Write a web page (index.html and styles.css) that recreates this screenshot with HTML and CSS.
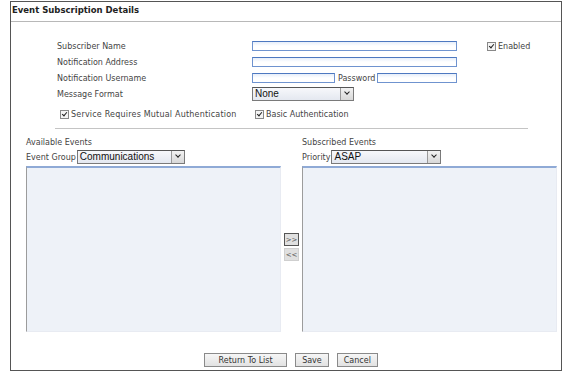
FILE: index.html
```html
<!DOCTYPE html>
<html lang="en">
<head>
    <meta charset="UTF-8">
    <title>Event Subscription Details</title>
    <link rel="stylesheet" href="styles.css">
</head>
<body>

    <div class="panel">
        <div class="panel-title">Event Subscription Details</div>

        <div class="form">
            <div class="row">
                <label class="label">Subscriber Name</label>
                <input type="text" class="text-input wide">
                <span class="check-wrap enabled"><span class="check"></span>Enabled</span>
            </div>
            <div class="row">
                <label class="label">Notification Address</label>
                <input type="text" class="text-input wide">
            </div>
            <div class="row">
                <label class="label">Notification Username</label>
                <div class="pair">
                    <input type="text" class="text-input short">
                    <span class="inline-label">Password</span>
                    <input type="text" class="text-input fill">
                </div>
            </div>
            <div class="row">
                <label class="label">Message Format</label>
                <div class="fake-select format">
                    <span class="sel-text">None</span>
                    <span class="sel-arrow"></span>
                </div>
            </div>
            <div class="row checks">
                <span class="check-wrap mutual"><span class="check"></span>Service Requires Mutual Authentication</span>
                <span class="check-wrap"><span class="check"></span>Basic Authentication</span>
            </div>
        </div>

        <hr class="divider">

        <div class="lists">
            <div class="list-col">
                <div class="list-title">Available Events</div>
                <div class="list-filter">
                    <span>Event Group</span>
                    <div class="fake-select group">
                        <span class="sel-text">Communications</span>
                        <span class="sel-arrow"></span>
                    </div>
                </div>
                <div class="listbox"></div>
            </div>

            <div class="move-btns">
                <button class="move-btn active">&gt;&gt;</button>
                <button class="move-btn">&lt;&lt;</button>
            </div>

            <div class="list-col">
                <div class="list-title">Subscribed Events</div>
                <div class="list-filter">
                    <span>Priority</span>
                    <div class="fake-select priority">
                        <span class="sel-text">ASAP</span>
                        <span class="sel-arrow"></span>
                    </div>
                </div>
                <div class="listbox"></div>
            </div>
        </div>

        <div class="actions">
            <button class="btn return">Return To List</button>
            <button class="btn">Save</button>
            <button class="btn">Cancel</button>
        </div>
    </div>

</body>
</html>
```

FILE: styles.css
```css
body {
    margin: 0;
    padding: 0;
    background: white;
    font-family: "DejaVu Sans", Verdana, sans-serif;
    font-size: 8px;
    color: #333;
}

.panel {
    margin: 1px 0 0 10px;
    width: 552px;
    height: 370px;
    box-sizing: border-box;
    border: 1px solid #555;
    display: flex;
    flex-direction: column;
}

.panel-title {
    height: 19px;
    line-height: 17px;
    padding-left: 1px;
    font-weight: bold;
    font-size: 8.5px;
    color: #222;
    border-bottom: 1px solid #b8b8b8;
}

.form {
    margin-top: 16px;
    padding-left: 46px;
}

.row {
    display: flex;
    align-items: center;
    height: 16px;
}

.label {
    width: 195px;
    color: #444;
}

.text-input {
    height: 10px;
    box-sizing: border-box;
    border: 1px solid #6f93cf;
    border-top-color: #4d78c0;
    background: linear-gradient(#e6eefa, #ffffff 50%);
    padding: 0;
    margin: 0;
    outline: none;
}

.wide {
    width: 205px;
}

.pair {
    width: 205px;
    display: flex;
    align-items: center;
}

.short {
    width: 83px;
}

.fill {
    flex: 1;
    min-width: 0;
}

.inline-label {
    margin: 0 2px 0 3px;
    color: #444;
}

.check-wrap {
    display: inline-flex;
    align-items: center;
    color: #444;
}

.check {
    width: 9px;
    height: 9px;
    box-sizing: border-box;
    border: 1px solid #888;
    background: #f4f4f4;
    margin-right: 2px;
    position: relative;
}

.check::after {
    content: "";
    position: absolute;
    left: 2px;
    top: 0px;
    width: 2px;
    height: 4px;
    border: solid #222;
    border-width: 0 1.5px 1.5px 0;
    transform: rotate(40deg);
}

.enabled {
    margin-left: 30px;
}

.checks {
    margin-top: 4px;
    padding-left: 3px;
}

.mutual {
    width: 195px;
    letter-spacing: 0.2px;
}

.fake-select {
    display: flex;
    align-items: center;
    height: 14px;
    box-sizing: border-box;
    border: 1px solid #7a7a7a;
    border-top-color: #555;
    background: linear-gradient(#f7f8fb, #e4e8f0);
    font-family: "Liberation Sans", Arial, sans-serif;
    font-size: 10px;
    color: #111;
}

.sel-text {
    flex: 1;
    padding-left: 2px;
    line-height: 12px;
}

.sel-arrow {
    width: 13px;
    height: 12px;
    box-sizing: border-box;
    border-left: 1px solid #9a9a9a;
    background: linear-gradient(#f2f2f2, #d8d8d8);
    position: relative;
}

.sel-arrow::after {
    content: "";
    position: absolute;
    left: 4px;
    top: 2px;
    width: 3px;
    height: 3px;
    border: solid #222;
    border-width: 0 1.5px 1.5px 0;
    transform: rotate(45deg);
}

.format {
    width: 102px;
}

.divider {
    margin: 6px 33px 0 44px;
    border: none;
    border-top: 1px solid #c4c4c4;
    height: 0;
}

.lists {
    display: flex;
    margin-top: 8px;
    padding-left: 15px;
}

.list-col {
    width: 255px;
    display: flex;
    flex-direction: column;
}

.list-title {
    height: 12px;
    line-height: 12px;
    color: #444;
}

.list-filter {
    display: flex;
    align-items: center;
    height: 14px;
    margin-top: 1px;
    color: #444;
}

.list-filter span:first-child {
    margin-right: 1px;
}

.group {
    width: 108px;
}

.priority {
    width: 110px;
}

.listbox {
    margin-top: 2px;
    height: 166px;
    box-sizing: border-box;
    background: #eef2f8;
    border-top: 2px solid #8faad6;
    border-left: 1px solid #9c9c9c;
    border-right: 1px solid #e8ebf2;
    border-bottom: 1px solid #e8ebf2;
}

.move-btns {
    width: 21px;
    display: flex;
    flex-direction: column;
    align-items: center;
    gap: 2px;
    padding-top: 96px;
}

.move-btn {
    width: 15px;
    height: 13px;
    padding: 0;
    font-family: "DejaVu Sans", Verdana, sans-serif;
    font-size: 7px;
    color: #555;
    background: #e0e0e0;
    border: 1px solid #cfcfcf;
}

.move-btn.active {
    border-color: #555;
}

.actions {
    display: flex;
    justify-content: center;
    gap: 8px;
    margin-top: auto;
    margin-bottom: 3px;
    padding-left: 10px;
}

.btn {
    height: 14px;
    padding: 0 6px;
    font-family: "DejaVu Sans", Verdana, sans-serif;
    font-size: 8px;
    color: #333;
    background: linear-gradient(#f6f6f6, #e2e2e2);
    border: 1px solid #8a8a8a;
}

.return {
    width: 83px;
}
```
